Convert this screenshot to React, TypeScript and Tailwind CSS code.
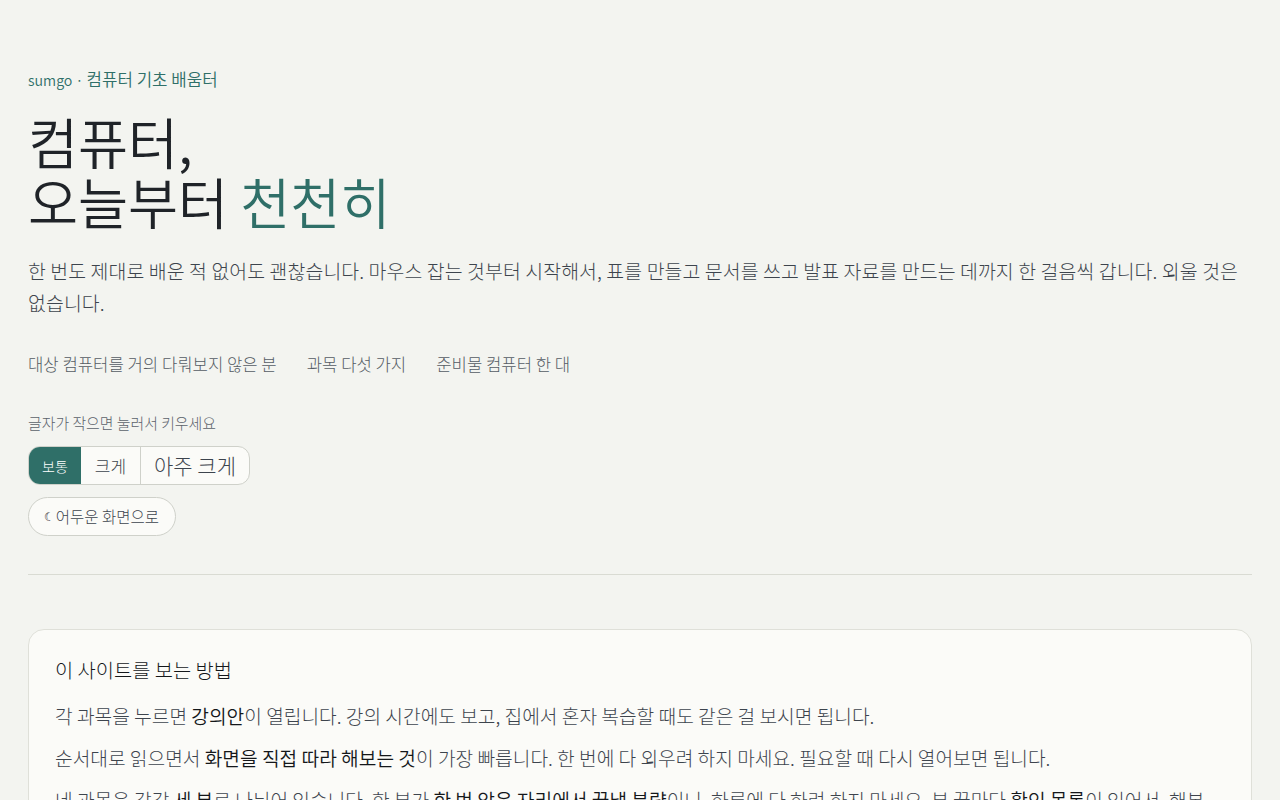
import React from 'react';

const stack = 'font-["Noto_Sans_CJK_KR",sans-serif]';
const strong = 'font-[350] text-[#14171a]';

export default function App() {
  return (
    <div className={`min-h-screen bg-[#f3f4f0] font-light break-keep text-[#3d444d] ${stack}`}>
      <div className="px-7 pt-[67px]">
        <p className="text-[16.8px] leading-6 font-[350] text-[#2f6f68]">
          <span className="text-[14.2px]">sumgo · </span>컴퓨터 기초 배움터
        </p>

        <h1 className="mt-[19px] text-[54.4px] leading-[60px] font-[350] text-[#1f2328]">
          컴퓨터,
          <br />
          오늘부터 <span className="text-[#2f6f68]">천천히</span>
        </h1>

        <p className="mt-6 text-[19.4px] leading-8 tracking-[0.1px]">
          한 번도 제대로 배운 적 없어도 괜찮습니다. 마우스 잡는 것부터 시작해서, 표를 만들고 문서를 쓰고 발표 자료를 만드는 데까지 한 걸음씩 갑니다. 외울 것은 없습니다.
        </p>

        <div className="mt-[33px] flex gap-[30px] text-[16.7px] leading-6 text-[#555c64]">
          <span>대상 컴퓨터를 거의 다뤄보지 않은 분</span>
          <span>과목 다섯 가지</span>
          <span>준비물 컴퓨터 한 대</span>
        </div>

        <p className="mt-[37px] text-[14.9px] leading-5 text-[#5b626b]">글자가 작으면 눌러서 키우세요</p>

        <div className="mt-[13px] flex w-fit overflow-hidden rounded-xl border border-[#cfd1ca] bg-[#fbfbf8]">
          <button className="h-[37px] bg-[#2f6f68] px-[13px] text-sm text-white">보통</button>
          <button className="h-[37px] border-r border-[#cfd1ca] px-[14px] text-[17px]">크게</button>
          <button className="h-[37px] px-[13px] text-[21px]">아주 크게</button>
        </div>

        <button className="mt-3 flex h-[39px] items-center rounded-[20px] border border-[#cfd1ca] bg-[#fbfbf8] pr-4 pl-[15px] text-[15.5px]">
          <span className='mr-[1px] font-["DejaVu_Sans"] text-[12px] font-bold text-[#1f2328]'>☾</span>
          어두운 화면으로
        </button>

        <hr className="mt-[38px] border-t border-[#d9dbd3]" />

        <section className="mt-[54px] rounded-2xl border border-[#dfe0d9] bg-[#fbfbf8] px-[26px] pt-6 pb-6">
          <h2 className="text-[19.8px] leading-8 font-light text-[#14171a]">이 사이트를 보는 방법</h2>
          <p className="mt-[15px] text-[19.2px] leading-[30px]">
            각 과목을 누르면 <b className={strong}>강의안</b>이 열립니다. 강의 시간에도 보고, 집에서 혼자 복습할 때도 같은 걸 보시면 됩니다.
          </p>
          <p className="mt-3 text-[19.2px] leading-[30px]">
            순서대로 읽으면서 <b className={strong}>화면을 직접 따라 해보는 것</b>이 가장 빠릅니다. 한 번에 다 외우려 하지 마세요. 필요할 때 다시 열어보면 됩니다.
          </p>
          <p className="mt-3 text-[19.2px] leading-[30px]">
            네 과목은 각각 <b className={strong}>세 부</b>로 나뉘어 있습니다. 한 부가 <b className={strong}>한 번 앉은 자리에서 끝낼 분량</b>이니, 하루에 다 하려 하지 마세요. 부 끝마다 <b className={strong}>확인 목록</b>이 있어서, 해본 것을 하나씩 체크할 수 있습니다.
          </p>
        </section>
      </div>
    </div>
  );
}
